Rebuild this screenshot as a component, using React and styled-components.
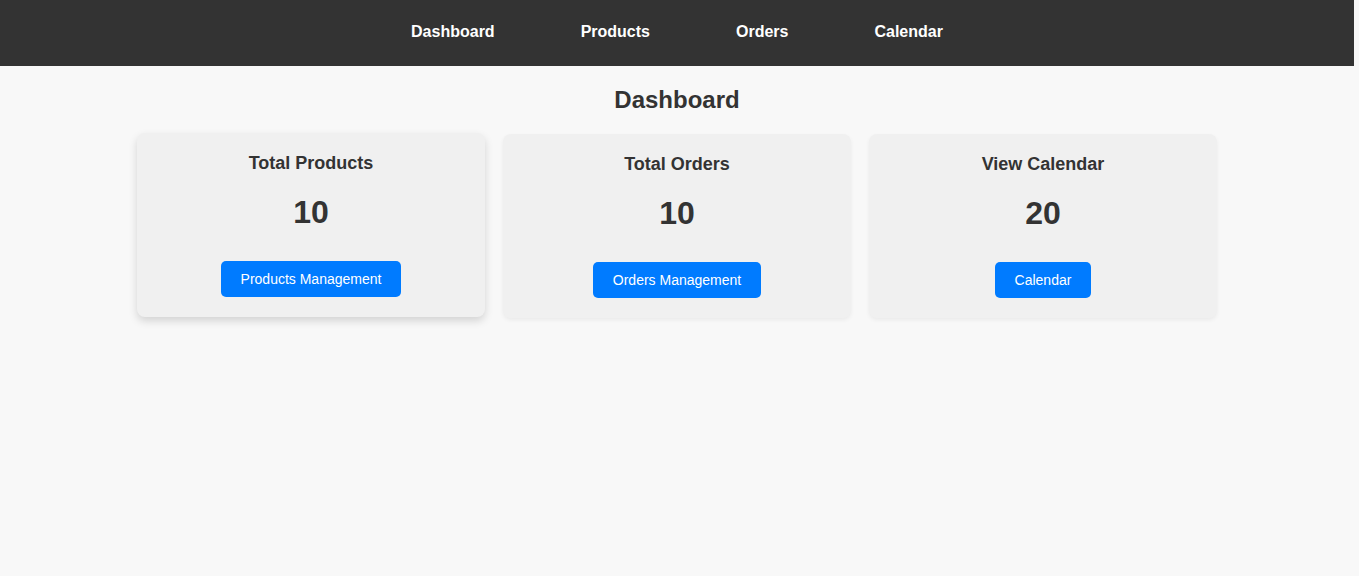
import React from "react";
import styled, { createGlobalStyle } from "styled-components";

const GlobalStyle = createGlobalStyle`
  body {
    margin: 0;
    background-color: #f8f8f8;
    font-family: "Liberation Sans", Arial, sans-serif;
    color: #333;
  }
`;

const Page = styled.div`
  min-height: 576px;
  padding-right: 5px;
`;

const NavBar = styled.nav`
  display: flex;
  justify-content: center;
  gap: 86px;
  height: 66px;
  box-sizing: border-box;
  padding-top: 23px;
  background-color: #333;
`;

const NavLink = styled.a`
  color: #fff;
  font-weight: bold;
  font-size: 16px;
  text-decoration: none;
  cursor: pointer;
`;

const Main = styled.main`
  padding: 20px 0;
  display: flex;
  flex-direction: column;
  align-items: center;
`;

const Title = styled.h2`
  margin: 0 0 20px;
  font-size: 24px;
  color: #333;
`;

const CardGrid = styled.div`
  display: grid;
  grid-template-columns: repeat(3, 348px);
  gap: 18px;
`;

const Card = styled.div`
  background-color: #f0f0f0;
  border-radius: 8px;
  padding: 20px;
  text-align: center;
  box-shadow: ${(p) =>
    p.$lifted ? "0 4px 8px rgba(0, 0, 0, 0.15)" : "0 2px 4px rgba(0, 0, 0, 0.06)"};
  transform: ${(p) => (p.$lifted ? "translateY(-1px)" : "none")};
`;

const CardTitle = styled.h3`
  margin: 0 0 20px;
  font-size: 18px;
  color: #333;
`;

const Count = styled.p`
  margin: 0 0 30px;
  font-size: 32px;
  font-weight: bold;
  color: #333;
`;

const ActionButton = styled.button`
  background-color: #007bff;
  color: #fff;
  border: none;
  border-radius: 5px;
  padding: 10px 20px;
  font-family: "Liberation Sans", Arial, sans-serif;
  font-size: 14px;
  cursor: pointer;
`;

const cards = [
  { title: "Total Products", count: 10, action: "Products Management", lifted: true },
  { title: "Total Orders", count: 10, action: "Orders Management" },
  { title: "View Calendar", count: 20, action: "Calendar" },
];

const App = () => {
  return (
    <>
      <GlobalStyle />
      <Page>
        <NavBar>
          <NavLink>Dashboard</NavLink>
          <NavLink>Products</NavLink>
          <NavLink>Orders</NavLink>
          <NavLink>Calendar</NavLink>
        </NavBar>
        <Main>
          <Title>Dashboard</Title>
          <CardGrid>
            {cards.map((card) => (
              <Card key={card.title} $lifted={card.lifted}>
                <CardTitle>{card.title}</CardTitle>
                <Count>{card.count}</Count>
                <ActionButton>{card.action}</ActionButton>
              </Card>
            ))}
          </CardGrid>
        </Main>
      </Page>
    </>
  );
};

export default App;
